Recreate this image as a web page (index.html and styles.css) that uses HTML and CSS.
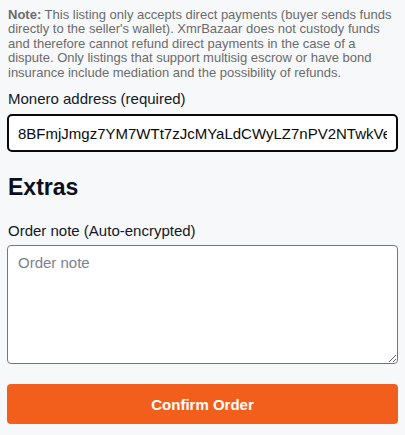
FILE: index.html
```html
<!DOCTYPE html>
<html lang="en">
<head>
<meta charset="utf-8">
<title>Checkout</title>
<link rel="stylesheet" href="styles.css">
</head>
<body>
<div class="page">
  <p class="note"><strong>Note:</strong> This listing only accepts direct payments (buyer sends funds directly to the seller's wallet). XmrBazaar does not custody funds and therefore cannot refund direct payments in the case of a dispute. Only listings that support multisig escrow or have bond insurance include mediation and the possibility of refunds.</p>

  <label class="label label-address" for="addr">Monero address (required)</label>
  <input class="address" id="addr" type="text" value="8BFmjJmgz7YM7WTt7zJcMYaLdCWyLZ7nPV2NTwkVeXkAQFq1yd">

  <h2 class="heading">Extras</h2>

  <label class="label label-note" for="note">Order note (Auto-encrypted)</label>
  <textarea class="order-note" id="note" placeholder="Order note"></textarea>

  <button class="confirm" type="button">Confirm Order</button>
</div>
</body>
</html>
```

FILE: styles.css
```css
html, body {
  margin: 0;
  padding: 0;
  background: #f7f8fa;
}

body {
  font-family: "Liberation Sans", Arial, sans-serif;
  color: #111827;
}

.page {
  display: flex;
  flex-direction: column;
  padding: 8px 7px 0 7px;
}

.note {
  margin: 0;
  font-size: 13px;
  line-height: 14.4px;
  color: #6b6b6b;
  padding-left: 1px;
}

.note strong {
  font-weight: bold;
}

.label {
  font-size: 15px;
  line-height: 18px;
  color: #111827;
  padding-left: 1px;
}

.label-address {
  margin-top: 10px;
}

.address {
  margin-top: 6px;
  height: 38px;
  box-sizing: border-box;
  border: 2px solid #0a0a0a;
  border-radius: 5px;
  background: #ffffff;
  padding: 0 9px;
  font-family: "Liberation Sans", Arial, sans-serif;
  font-size: 15px;
  color: #0a0a0a;
  outline: none;
  width: 100%;
}

.heading {
  margin: 21px 0 0 0;
  font-size: 23px;
  line-height: 29px;
  font-weight: bold;
  color: #0b0f1a;
  padding-left: 1px;
}

.label-note {
  margin-top: 20px;
}

.order-note {
  margin-top: 5px;
  height: 119px;
  box-sizing: border-box;
  border: 1px solid #767676;
  border-radius: 4px;
  background: #ffffff;
  padding: 8px 10px;
  font-family: "Liberation Sans", Arial, sans-serif;
  font-size: 15px;
  line-height: 18px;
  width: 100%;
  resize: vertical;
  outline: none;
}

.order-note::placeholder {
  color: #7b8190;
}

.confirm {
  margin-top: 20px;
  height: 40px;
  border: none;
  border-radius: 4px;
  background: #f25f1c;
  color: #ffffff;
  font-family: "Liberation Sans", Arial, sans-serif;
  font-size: 15px;
  font-weight: bold;
  width: 100%;
  cursor: pointer;
}
```
